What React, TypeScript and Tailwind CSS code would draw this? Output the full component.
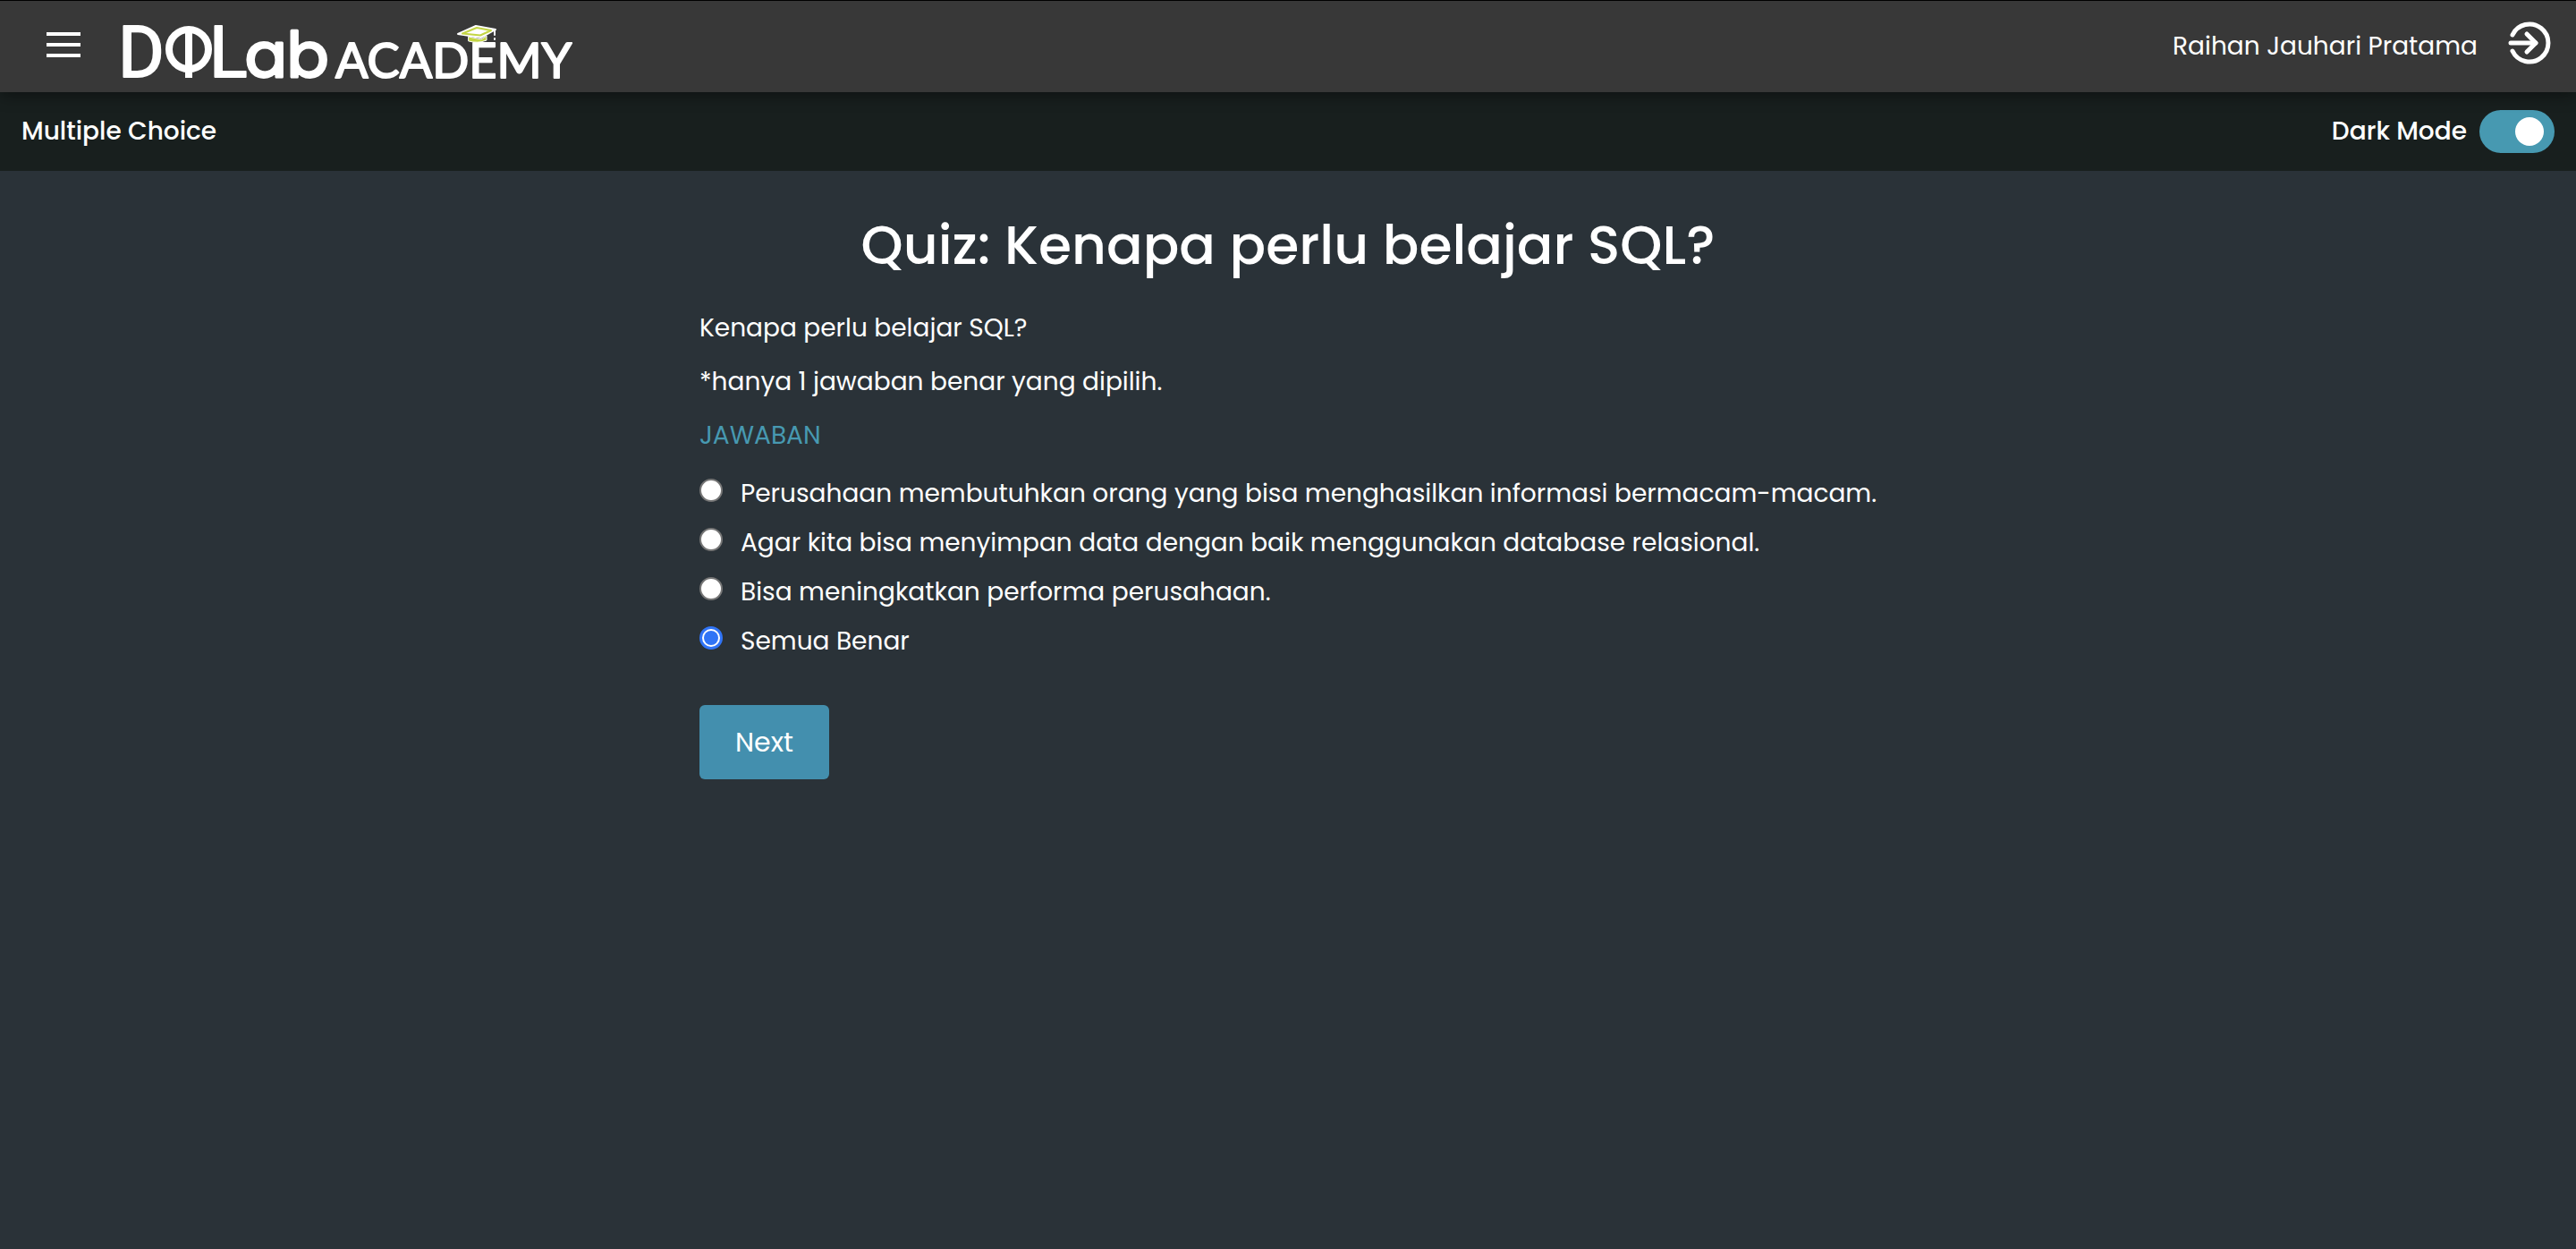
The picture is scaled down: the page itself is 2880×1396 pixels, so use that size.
import { useState } from "react";

const OPTIONS = [
  "Perusahaan membutuhkan orang yang bisa menghasilkan informasi bermacam-macam.",
  "Agar kita bisa menyimpan data dengan baik menggunakan database relasional.",
  "Bisa meningkatkan performa perusahaan.",
  "Semua Benar",
];

function Logo() {
  return (
    <svg
      width="508"
      height="102"
      viewBox="0 0 508 102"
      role="img"
      aria-label="DQLab Academy"
      fill="#fff"
      stroke="#fff"
      strokeLinejoin="round"
      strokeLinecap="round"
      className="overflow-visible"
    >
      <g fontSize="79" strokeWidth="2" className="font-['Roboto',sans-serif]">
        <text x="-4" y="85">D</text>
        <text x="98" y="85">L</text>
      </g>
      <circle cx="75" cy="54" r="22" fill="none" strokeWidth="8" />
      <rect x="71" y="30" width="8" height="56" stroke="none" />
      <text x="138" y="85" fontSize="69" strokeWidth="3" className="font-['Poppins',sans-serif]">
        ab
      </text>
      <text x="239" y="86" fontSize="54" strokeWidth="2" className="font-['Lato',sans-serif]">
        ACADEMY
      </text>
      <path d="M376 37 L396 28 L418 32 L402 41 Z" strokeWidth="2" />
      <path d="M381 36.500 L397 30 L413 33 L401 38.500 Z" stroke="#c3d544" strokeWidth="2" />
      <path d="M388 40 L402 43 L408 39 V44 Q398 48 388 45 Z" fill="#c3d544" strokeWidth="1" />
      <path d="M417 33 V43" strokeWidth="2" strokeDasharray="5 4" />
    </svg>
  );
}

function ExitIcon() {
  return (
    <svg
      width="48"
      height="48"
      viewBox="0 0 48 48"
      fill="none"
      stroke="#fff"
      strokeWidth="5"
      strokeLinecap="round"
      strokeLinejoin="round"
      aria-hidden="true"
    >
      <path d="M5 15 A21 21 0 1 1 5 33" />
      <path d="M3 24 H31" />
      <path d="M21 14 L31 24 L21 34" />
    </svg>
  );
}

export default function App() {
  const [dark, setDark] = useState(true);
  const [answer, setAnswer] = useState(3);

  return (
    <div className="flex min-h-screen flex-col bg-[#2a3238] font-['Poppins','Inter',sans-serif] text-[28px] leading-[42px] text-white">
      <header className="relative flex h-[103px] items-center border-t border-black bg-[#383838] pr-7 pl-[52px] shadow-[0_4px_16px_rgba(0,0,0,0.4)]">
        <button aria-label="Menu" className="mb-1 flex flex-col gap-2">
          <span className="h-1 w-[38px] bg-white" />
          <span className="h-1 w-[38px] bg-white" />
          <span className="h-1 w-[38px] bg-white" />
        </button>
        <a href="#" className="ml-[46px]">
          <Logo />
        </a>
        <span className="ml-auto">Raihan Jauhari Pratama</span>
        <button aria-label="Log out" className="mb-2 ml-[34px]">
          <ExitIcon />
        </button>
      </header>

      <div className="flex h-[88px] items-center justify-between bg-[#181f1e] px-6 font-medium">
        <span>Multiple Choice</span>
        <label className="flex items-center gap-3.5">
          Dark Mode
          <input
            type="checkbox"
            role="switch"
            checked={dark}
            onChange={(e) => setDark(e.target.checked)}
            className="flex h-12 w-[84px] appearance-none items-center rounded-full bg-gray-500 px-3 before:size-8 before:rounded-full before:bg-white checked:justify-end checked:bg-[#4799b1]"
          />
        </label>
      </div>

      <main className="mx-auto w-full max-w-[1316px] pt-10">
        <h1 className="text-center text-[60px] leading-[86px] font-medium">
          Quiz: Kenapa perlu belajar SQL?
        </h1>
        <p className="mt-[29px]">Kenapa perlu belajar SQL?</p>
        <p className="mt-[18px]">*hanya 1 jawaban benar yang dipilih.</p>
        <fieldset className="mt-[18px]">
          <legend className="text-[#4799b1]">JAWABAN</legend>
          <div className="-mr-4 mt-[23px] flex flex-col gap-[13px]">
            {OPTIONS.map((option, i) => (
              <label key={option} className="flex items-start gap-5">
                <input
                  type="radio"
                  name="answer"
                  checked={answer === i}
                  onChange={() => setAnswer(i)}
                  className="mt-1 flex size-[26px] shrink-0 appearance-none items-center justify-center rounded-full border-2 border-[#767676] bg-white before:rounded-full checked:border-[3px] checked:border-[#3074f6] checked:before:size-4 checked:before:bg-[#3074f6]"
                />
                {option}
              </label>
            ))}
          </div>
        </fieldset>
        <button className="mt-[50px] h-[83px] rounded-md bg-[#438fae] px-10 text-[30px]">Next</button>
      </main>
    </div>
  );
}
